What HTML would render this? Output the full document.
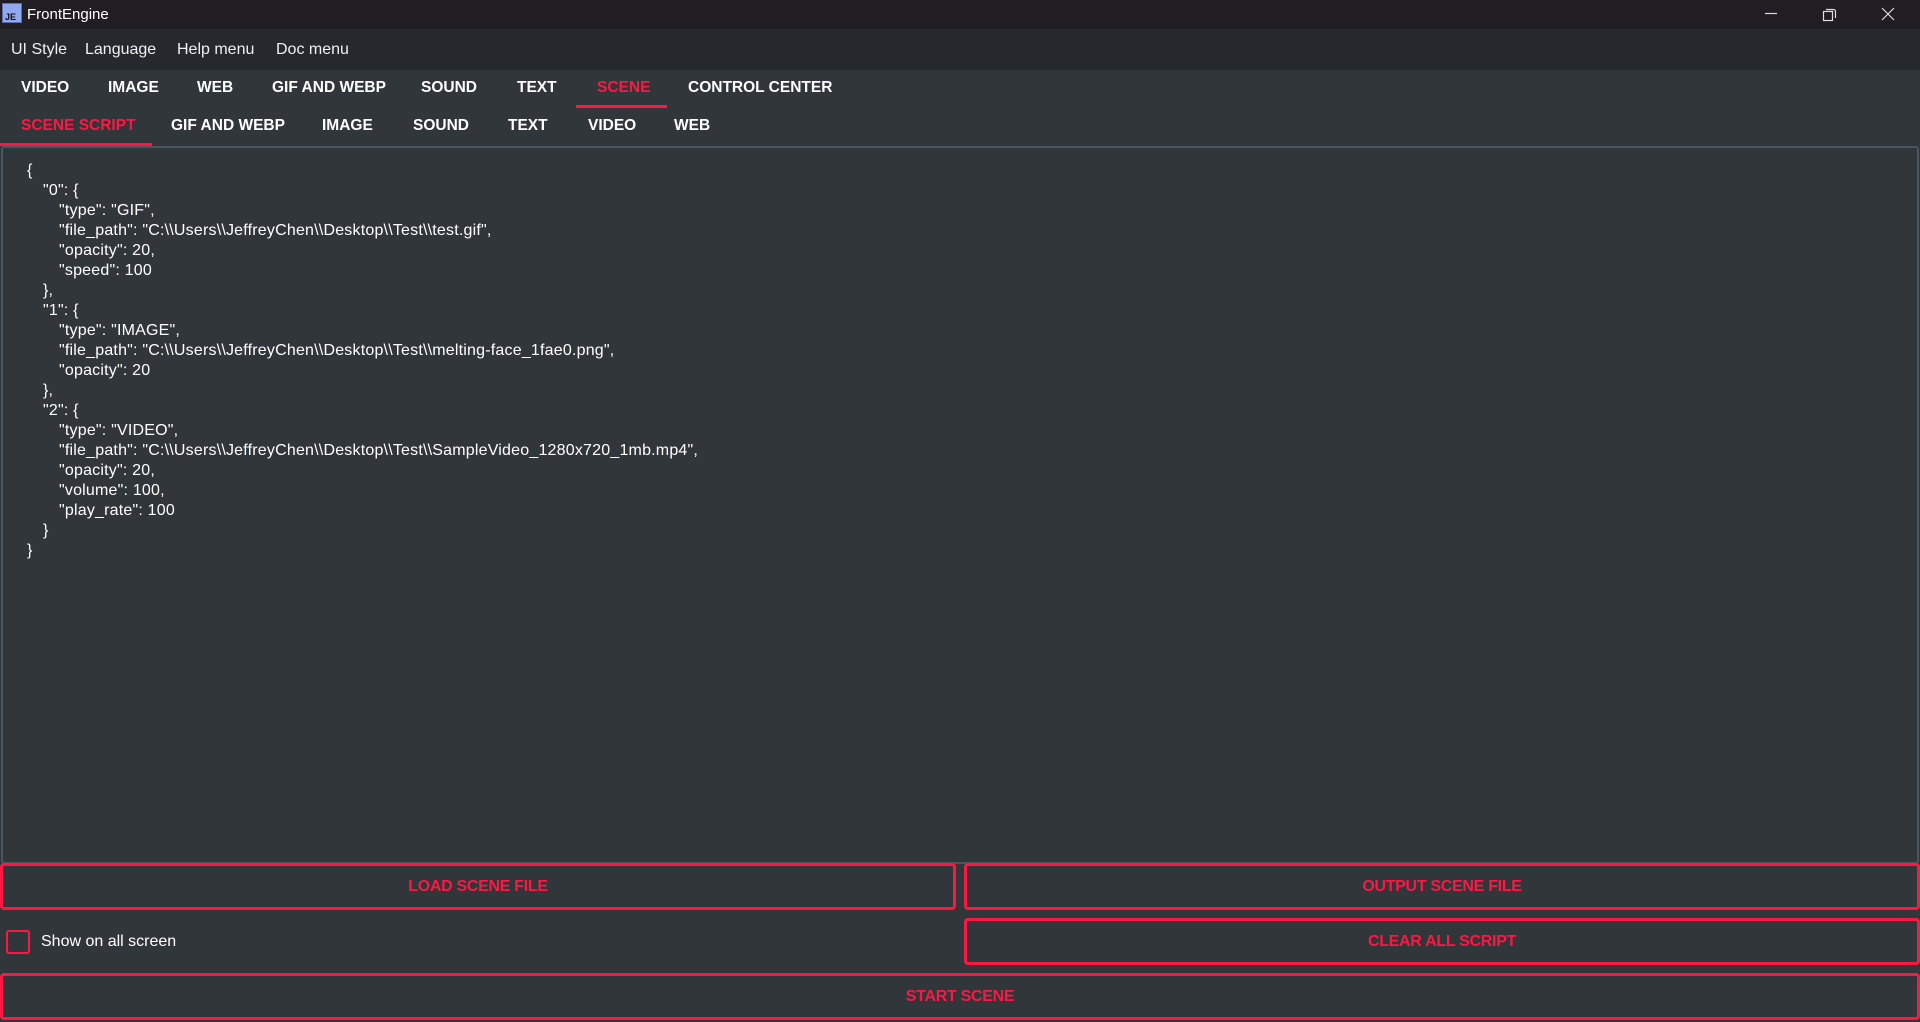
<!DOCTYPE html>
<html><head><meta charset="utf-8"><style>
*{margin:0;padding:0;box-sizing:border-box}
body{width:1920px;height:1022px;background:#31363b;font-family:"Liberation Sans",sans-serif;color:#fff;position:relative;overflow:hidden}
.a{position:absolute;white-space:pre}
#title{position:absolute;left:0;top:0;width:1920px;height:29px;background:#201d23}
#menu{position:absolute;left:0;top:29px;width:1920px;height:41px;background:#25282c}
.m{position:absolute;top:41px;font-size:16px;color:#f0f0f0}
.t{position:absolute;font-size:15.5px;font-weight:bold;color:#fff}
.red{color:#ff1744}
#ed{position:absolute;left:1px;top:146px;width:1918px;height:718px;border:2px solid #4b555e;border-radius:3px}
#code{position:absolute;left:27px;top:161px;font-size:16px;line-height:20px;color:#fff;white-space:pre;letter-spacing:0.2px}
#code .i1{padding-left:16px}#code .i2{padding-left:32px}
.btn{position:absolute;border:3px solid #ff1744;border-radius:4px;color:#ff1744;font-weight:bold;font-size:16px;display:flex;align-items:center;justify-content:center;letter-spacing:-0.3px}
</style></head><body>
<div id="title"></div>
<svg class="a" style="left:2px;top:3px" width="20" height="20" viewBox="0 0 20 20"><rect x="0.5" y="0.5" width="19" height="19" fill="#8fa8f0" stroke="#5a6fb8"/><text x="3" y="17" font-size="9" font-weight="bold" fill="#111" font-family="Liberation Sans">JE</text></svg>
<div class="a" style="left:27px;top:6px;font-size:15px;color:#fff">FrontEngine</div>
<svg class="a" style="left:1760px;top:4px" width="140" height="22"><line x1="5" y1="9.5" x2="17" y2="9.5" stroke="#ddd" stroke-width="1.2"/><rect x="63.5" y="7.5" width="9" height="9" fill="none" stroke="#ddd" stroke-width="1.2"/><path d="M66 5.5h7.5a2 2 0 0 1 2 2V14" fill="none" stroke="#ddd" stroke-width="1.2"/><path d="M122 4l12 12M134 4l-12 12" stroke="#ddd" stroke-width="1.2"/></svg>
<div id="menu"></div>
<div class="m" style="left:11px">UI Style</div>
<div class="m" style="left:85px">Language</div>
<div class="m" style="left:177px">Help menu</div>
<div class="m" style="left:276px">Doc menu</div>

<div class="t" style="left:21px;top:79px">VIDEO</div>
<div class="t" style="left:108px;top:79px">IMAGE</div>
<div class="t" style="left:197px;top:79px">WEB</div>
<div class="t" style="left:272px;top:79px">GIF AND WEBP</div>
<div class="t" style="left:421px;top:79px">SOUND</div>
<div class="t" style="left:517px;top:79px">TEXT</div>
<div class="t red" style="left:597px;top:79px">SCENE</div>
<div class="t" style="left:688px;top:79px">CONTROL CENTER</div>
<div class="a" style="left:576px;top:105px;width:91px;height:3px;background:#ff1744"></div>

<div class="t red" style="left:21px;top:117px">SCENE SCRIPT</div>
<div class="t" style="left:171px;top:117px">GIF AND WEBP</div>
<div class="t" style="left:322px;top:117px">IMAGE</div>
<div class="t" style="left:413px;top:117px">SOUND</div>
<div class="t" style="left:508px;top:117px">TEXT</div>
<div class="t" style="left:588px;top:117px">VIDEO</div>
<div class="t" style="left:674px;top:117px">WEB</div>
<div class="a" style="left:0;top:143px;width:152px;height:3px;background:#ff1744"></div>

<div id="ed"></div>
<div id="code"><div>{</div><div class="i1">"0": {</div><div class="i2">"type": "GIF",</div><div class="i2">"file_path": "C:\\Users\\JeffreyChen\\Desktop\\Test\\test.gif",</div><div class="i2">"opacity": 20,</div><div class="i2">"speed": 100</div><div class="i1">},</div><div class="i1">"1": {</div><div class="i2">"type": "IMAGE",</div><div class="i2">"file_path": "C:\\Users\\JeffreyChen\\Desktop\\Test\\melting-face_1fae0.png",</div><div class="i2">"opacity": 20</div><div class="i1">},</div><div class="i1">"2": {</div><div class="i2">"type": "VIDEO",</div><div class="i2">"file_path": "C:\\Users\\JeffreyChen\\Desktop\\Test\\SampleVideo_1280x720_1mb.mp4",</div><div class="i2">"opacity": 20,</div><div class="i2">"volume": 100,</div><div class="i2">"play_rate": 100</div><div class="i1">}</div><div>}</div></div>

<div class="btn" style="left:0;top:863px;width:956px;height:47px">LOAD SCENE FILE</div>
<div class="btn" style="left:964px;top:863px;width:956px;height:47px">OUTPUT SCENE FILE</div>
<div class="a" style="left:6px;top:930px;width:24px;height:24px;border:2px solid #ff1744;border-radius:3px"></div>
<div class="a" style="left:41px;top:933px;font-size:16px;color:#fff">Show on all screen</div>
<div class="btn" style="left:964px;top:918px;width:956px;height:47px">CLEAR ALL SCRIPT</div>
<div class="btn" style="left:0;top:973px;width:1920px;height:47px">START SCENE</div>
</body></html>
